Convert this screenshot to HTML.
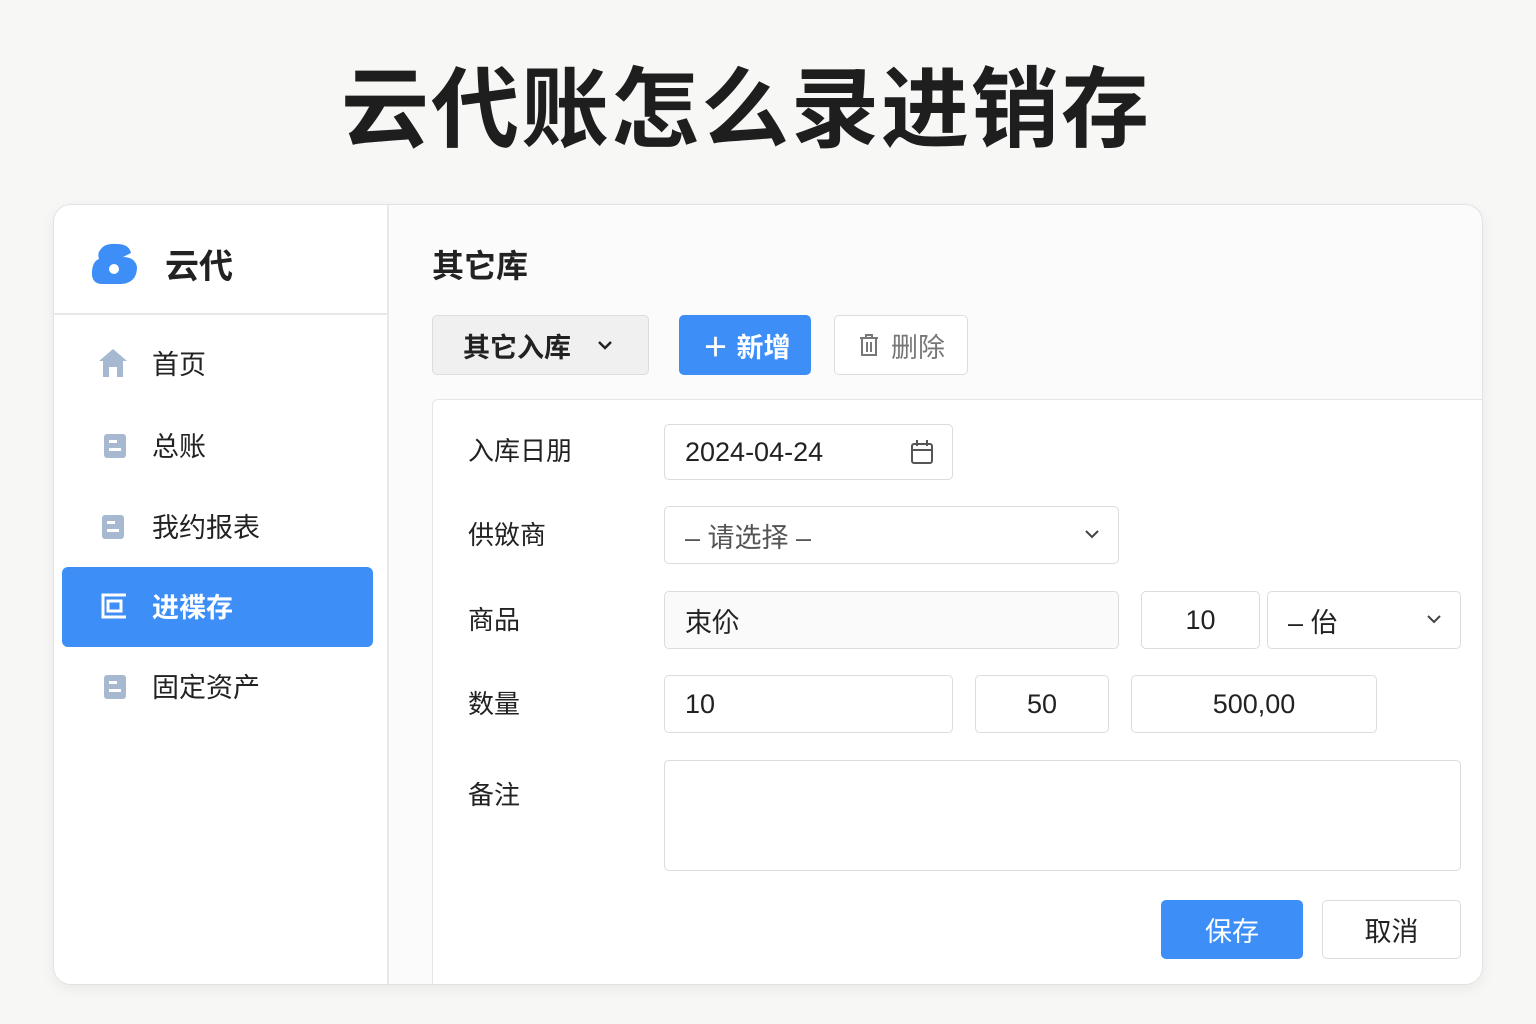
<!DOCTYPE html>
<html><head><meta charset="utf-8"><style>
*{box-sizing:border-box;margin:0;padding:0}
body{width:1536px;height:1024px;background:#f7f7f6;font-family:"Liberation Sans","Noto Sans CJK SC",sans-serif;color:#222;position:relative;overflow:hidden}
.a{position:absolute}
h1{position:absolute;left:0;width:1492px;top:52px;text-align:center;font-size:88px;font-weight:700;color:#1e1e1e;letter-spacing:2px;line-height:116px}
.card{left:53px;top:204px;width:1430px;height:781px;background:#fbfbfb;border:1px solid #e2e2e2;border-radius:18px;box-shadow:0 4px 14px rgba(0,0,0,.06);overflow:hidden}
.side{left:0;top:0;width:335px;height:100%;background:#fff;border-right:2px solid #e8e8e8}
.nav{font-size:27px;color:#222;line-height:34px}
.box{position:absolute;background:#fff;border:1.5px solid #dcdcdc;border-radius:5px;font-size:27px;display:flex;align-items:center;padding-left:20px}
.lbl{position:absolute;left:414px;font-size:26px;line-height:34px}
.ico{position:absolute;width:22px;height:24px;background:#a7b9d0;border-radius:3px}
.ico:before{content:"";position:absolute;left:5px;top:6px;width:8px;height:3px;background:#fff}
.ico:after{content:"";position:absolute;left:5px;top:14px;width:12px;height:3px;background:#fff}
.chev{position:absolute;right:18px;top:50%;margin-top:-6px}
</style></head><body>
<h1>云代账怎么录进销存</h1>
<div class="a card">
 <div class="a side">
  <svg class="a" style="left:37px;top:38px" width="48" height="42" viewBox="0 0 48 42"><path d="M10 6 Q14 0 26 1 Q38 1 40 10 L32 14 Q44 14 46 24 Q46 40 30 41 L10 41 Q0 40 1 28 Q2 18 8 16 Q6 10 10 6Z" fill="#3d8ef7"/><circle cx="23" cy="26" r="5" fill="#fff"/></svg>
  <div class="a" style="left:111px;top:34px;font-size:34px;font-weight:700">云代</div>
  <div class="a" style="left:0;top:108px;width:335px;height:2px;background:#e8e8e8"></div>
  <svg class="a" style="left:44px;top:143px" width="30" height="30" viewBox="0 0 30 30"><path d="M15 1 L29 13 L25 13 L25 29 L19 29 L19 19 L11 19 L11 29 L5 29 L5 13 L1 13Z" fill="#a7b9d0"/></svg>
  <div class="a nav" style="left:98px;top:143px">首页</div>
  <div class="ico" style="left:50px;top:229px"></div>
  <div class="a nav" style="left:98px;top:225px">总账</div>
  <div class="ico" style="left:48px;top:310px"></div>
  <div class="a nav" style="left:98px;top:306px">我约报表</div>
  <div class="a" style="left:8px;top:362px;width:311px;height:80px;background:#3d8ef7;border-radius:6px"></div>
  <svg class="a" style="left:47px;top:388px" width="26" height="26" viewBox="0 0 26 26"><path d="M25 2H2V24H25M7 8H20V18H7Z" fill="none" stroke="#fff" stroke-width="3"/></svg>
  <div class="a nav" style="left:98px;top:386px;color:#fff;font-weight:700">进褋存</div>
  <div class="ico" style="left:50px;top:470px"></div>
  <div class="a nav" style="left:98px;top:466px">固定资产</div>
 </div>
 <div class="a" style="left:378px;top:36px;font-size:32px;font-weight:600">其它库</div>
 <div class="box" style="left:378px;top:110px;width:217px;height:60px;background:#f0f0f0;padding-left:30px;font-weight:600">其它入库<svg style="margin-left:26px" width="16" height="10" viewBox="0 0 16 10"><path d="M2 2L8 8L14 2" fill="none" stroke="#222" stroke-width="2.5"/></svg></div>
 <div class="box" style="left:625px;top:110px;width:132px;height:60px;background:#3d8ef7;border-color:#3d8ef7;color:#fff;font-weight:700;padding-left:22px">＋ 新增</div>
 <div class="box" style="left:780px;top:110px;width:134px;height:60px;color:#777;padding-left:24px"><svg style="margin-right:12px" width="20" height="24" viewBox="0 0 20 24"><path d="M1 5H19M7 5V2H13V5M3 5V22H17V5M8 9V19M12 9V19" fill="none" stroke="#777" stroke-width="2"/></svg>删除</div>
 <div class="a" style="left:378px;top:194px;width:1060px;height:600px;background:#fff;border:1.5px solid #e6e6e6;border-radius:6px 0 0 0"></div>
 <div class="lbl" style="top:229px">入库日朋</div>
 <div class="box" style="left:610px;top:219px;width:289px;height:56px">2024-04-24
  <svg style="position:absolute;right:18px;top:14px" width="24" height="26" viewBox="0 0 24 26"><rect x="2" y="5" width="20" height="19" rx="2" fill="none" stroke="#555" stroke-width="2"/><path d="M2 11H22M7 1V7M17 1V7" stroke="#555" stroke-width="2"/></svg></div>
 <div class="lbl" style="top:313px">供敓商</div>
 <div class="box" style="left:610px;top:301px;width:455px;height:58px;color:#555">– 请选择 –<svg class="chev" width="16" height="10" viewBox="0 0 16 10"><path d="M2 2L8 8L14 2" fill="none" stroke="#444" stroke-width="2"/></svg></div>
 <div class="lbl" style="top:398px">商品</div>
 <div class="box" style="left:610px;top:386px;width:455px;height:58px;background:#fafafa">朿伱</div>
 <div class="box" style="left:1087px;top:386px;width:119px;height:58px;justify-content:center;padding:0">10</div>
 <div class="box" style="left:1213px;top:386px;width:194px;height:58px">– 佁<svg class="chev" width="16" height="10" viewBox="0 0 16 10"><path d="M2 2L8 8L14 2" fill="none" stroke="#444" stroke-width="2"/></svg></div>
 <div class="lbl" style="top:482px">数量</div>
 <div class="box" style="left:610px;top:470px;width:289px;height:58px">10</div>
 <div class="box" style="left:921px;top:470px;width:134px;height:58px;justify-content:center;padding:0">50</div>
 <div class="box" style="left:1077px;top:470px;width:246px;height:58px;justify-content:center;padding:0">500,00</div>
 <div class="lbl" style="top:573px">备注</div>
 <div class="box" style="left:610px;top:555px;width:797px;height:111px"></div>
 <div class="box" style="left:1107px;top:695px;width:142px;height:59px;background:#3d8ef7;border-color:#3d8ef7;color:#fff;justify-content:center;padding:0">保存</div>
 <div class="box" style="left:1268px;top:695px;width:139px;height:59px;justify-content:center;padding:0">取消</div>
</div>
</body></html>
